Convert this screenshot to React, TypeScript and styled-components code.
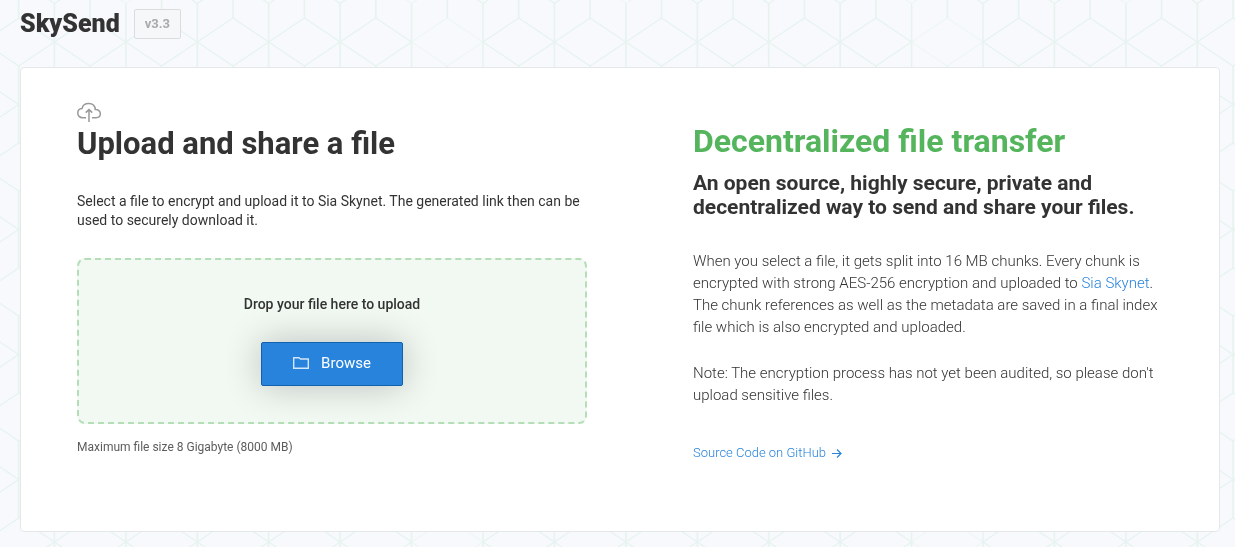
import React, { useRef } from "react";
import styled, { createGlobalStyle } from "styled-components";

const color = {
  page: "#f7f9fc",
  pattern: "#e6f3ef",
  text: "#333333",
  muted: "#5c5c5c",
  green: "#55b55d",
  blue: "#2883dd",
};

const GlobalStyle = createGlobalStyle`
  *, *::before, *::after { box-sizing: border-box; }
  body {
    margin: 0;
    background: ${color.page};
    color: ${color.text};
    font-family: Roboto, "Liberation Sans", sans-serif;
  }
  h1, h2, h3, p { margin: 0; }
`;

const Backdrop = styled.svg`
  position: fixed;
  inset: 0;
  z-index: -1;
  width: 100%;
  height: 100%;
`;

const Page = styled.div`
  padding: 0 15px 15px 20px;
`;

const Header = styled.header`
  display: flex;
  align-items: center;
  gap: 14px;
  height: 67px;
  padding-bottom: 20px;
`;

const Logo = styled.h1`
  font-size: 25px;
  font-weight: 900;
  line-height: 32px;
`;

const Version = styled.span`
  padding: 0 10px;
  border: 1px solid #dadcdd;
  border-radius: 2px;
  background: #f6f7f8;
  color: #a8abad;
  font-size: 13px;
  font-weight: 700;
  line-height: 28px;
`;

const Card = styled.main`
  display: grid;
  grid-template-columns: 1fr 1fr;
  border: 1px solid #e5e8e8;
  border-radius: 4px;
  background: #ffffff;
`;

const UploadColumn = styled.section`
  padding: 34px 33px 74px 56px;
`;

const InfoColumn = styled.section`
  padding: 53px 56px 68px 73px;
`;

const CloudIcon = styled.svg`
  display: block;
  width: 24px;
  height: 20px;
  margin-bottom: 2px;
`;

const Title = styled.h2<{ $accent?: boolean }>`
  color: ${(p) => (p.$accent ? color.green : color.text)};
  font-size: ${(p) => (p.$accent ? 32 : 31)}px;
  font-weight: 700;
  line-height: 40px;
`;

const Subtitle = styled.h3`
  margin-top: 10px;
  font-size: 21px;
  font-weight: 700;
  line-height: 24px;
`;

const Intro = styled.p`
  margin-top: 28px;
  font-size: 14px;
  line-height: 19px;
`;

const Body = styled.p`
  font-size: 15px;
  font-weight: 300;
  line-height: 22px;
  ${Subtitle} + & { margin-top: 31px; }
  & + & { margin-top: 24px; }
`;

const DropZone = styled.div`
  display: flex;
  flex-direction: column;
  align-items: center;
  gap: 28px;
  margin-top: 28px;
  padding: 34px 0 36px;
  border: 2px dashed #b3deb7;
  border-radius: 8px;
  background: #f2f9f3;
`;

const DropText = styled.p`
  font-size: 14px;
  font-weight: 500;
  line-height: 20px;
`;

const BrowseButton = styled.button`
  display: flex;
  align-items: center;
  justify-content: center;
  gap: 12px;
  width: 142px;
  height: 44px;
  padding: 0 0 2px;
  border: 1px solid #1360ad;
  border-radius: 2px;
  background: ${color.blue};
  box-shadow: 0 0 36px rgba(0, 0, 0, 0.24);
  color: #ffffff;
  font: 400 15px Roboto, sans-serif;
  cursor: pointer;
`;

const Note = styled.p`
  margin-top: 14px;
  color: ${color.muted};
  font-size: 12px;
  line-height: 18px;
`;

const TextLink = styled.a`
  color: ${color.blue};
  text-decoration: none;
`;

const SourceLink = styled(TextLink)`
  display: inline-flex;
  align-items: center;
  gap: 6px;
  margin-top: 37px;
  font-size: 13px;
  font-weight: 300;
  line-height: 20px;
`;

const COLUMNS = 7;
const TILE = 500;
const CELL = TILE / COLUMNS;
const ROW = TILE / 8;
const faded = new Set(["6:0", "2:7", "6:7"]);

function Cube({ col, row }: { col: number; row: number }) {
  const x = (col + (row % 2 ? -0.5 : 0)) * CELL;
  const y = row * ROW;
  const half = CELL / 2;
  return (
    <>
      <path d={`M${x} ${y - 38.5}V${y + 38.5}`} strokeWidth="1.6" />
      <path
        d={`M${x} ${y}l${half} -24l${half} 24l${-half} 24z`}
        strokeWidth="1.2"
        opacity={faded.has(`${col}:${row}`) ? 0.5 : 1}
      />
    </>
  );
}

function CubePattern() {
  const cubes = [];
  for (let row = 0; row <= 7; row++) {
    for (let col = -1; col <= COLUMNS + 1; col++) {
      cubes.push(<Cube key={`${col}:${row}`} col={col} row={row} />);
    }
  }
  return (
    <Backdrop aria-hidden="true">
      <defs>
        <pattern id="cubes" x="-17" y="-20" width={TILE} height={TILE} patternUnits="userSpaceOnUse">
          <g fill="none" stroke={color.pattern}>
            <g transform="translate(0 62)">{cubes}</g>
            <g transform="translate(0 -438)">{cubes}</g>
          </g>
        </pattern>
      </defs>
      <rect width="100%" height="100%" fill="url(#cubes)" />
    </Backdrop>
  );
}

export default function App() {
  const fileInput = useRef<HTMLInputElement>(null);
  return (
    <>
      <GlobalStyle />
      <CubePattern />
      <Page>
        <Header>
          <Logo>SkySend</Logo>
          <Version>v3.3</Version>
        </Header>
        <Card>
          <UploadColumn>
            <CloudIcon viewBox="0 0 24 20" fill="none" stroke="#999999" strokeWidth="1.5" aria-hidden="true">
              <path d="M9 15.7H5.6C2.6 15.7.8 13.7.8 11.2.8 8.6 2.5 6.7 5 6.6 5.6 3.4 8.3 1.6 11.7 1.6c3.7 0 6.3 2.3 6.6 6 2.9-.1 5 1.5 5 4.1 0 2.4-1.700 4-4.200 4H15" />
              <path d="M12 20V7.8M8.700 10.600 12 7.600l3.300 3" />
            </CloudIcon>
            <Title>Upload and share a file</Title>
            <Intro>
              Select a file to encrypt and upload it to Sia Skynet. The generated link then can be used to securely
              download it.
            </Intro>
            <DropZone>
              <DropText>Drop your file here to upload</DropText>
              <BrowseButton type="button" onClick={() => fileInput.current?.click()}>
                <svg width="16" height="12" viewBox="0 0 16 12" fill="none" stroke="#d4e6f8" strokeWidth="1.4" aria-hidden="true">
                  <path d="M.7 11.3V.7h5.300l1.500 1.300h7.800v9.300z" />
                </svg>
                Browse
              </BrowseButton>
              <input ref={fileInput} type="file" aria-label="File to upload" hidden />
            </DropZone>
            <Note>Maximum file size 8 Gigabyte (8000 MB)</Note>
          </UploadColumn>
          <InfoColumn>
            <Title $accent>Decentralized file transfer</Title>
            <Subtitle>An open source, highly secure, private and decentralized way to send and share your files.</Subtitle>
            <Body>
              When you select a file, it gets split into 16 MB chunks. Every chunk is encrypted with strong AES-256
              encryption and uploaded to <TextLink href="#skynet">Sia Skynet</TextLink>. The chunk references as well
              as the metadata are saved in a final index file which is also encrypted and uploaded.
            </Body>
            <Body>
              Note: The encryption process has not yet been audited, so please don't upload sensitive files.
            </Body>
            <SourceLink href="#source">
              Source Code on GitHub
              <svg width="10" height="10" viewBox="0 0 10 10" fill="none" stroke="currentColor" strokeWidth="1.2" aria-hidden="true">
                <path d="M0 5.500h9M5 1.500l4 4-4 4" />
              </svg>
            </SourceLink>
          </InfoColumn>
        </Card>
      </Page>
    </>
  );
}
